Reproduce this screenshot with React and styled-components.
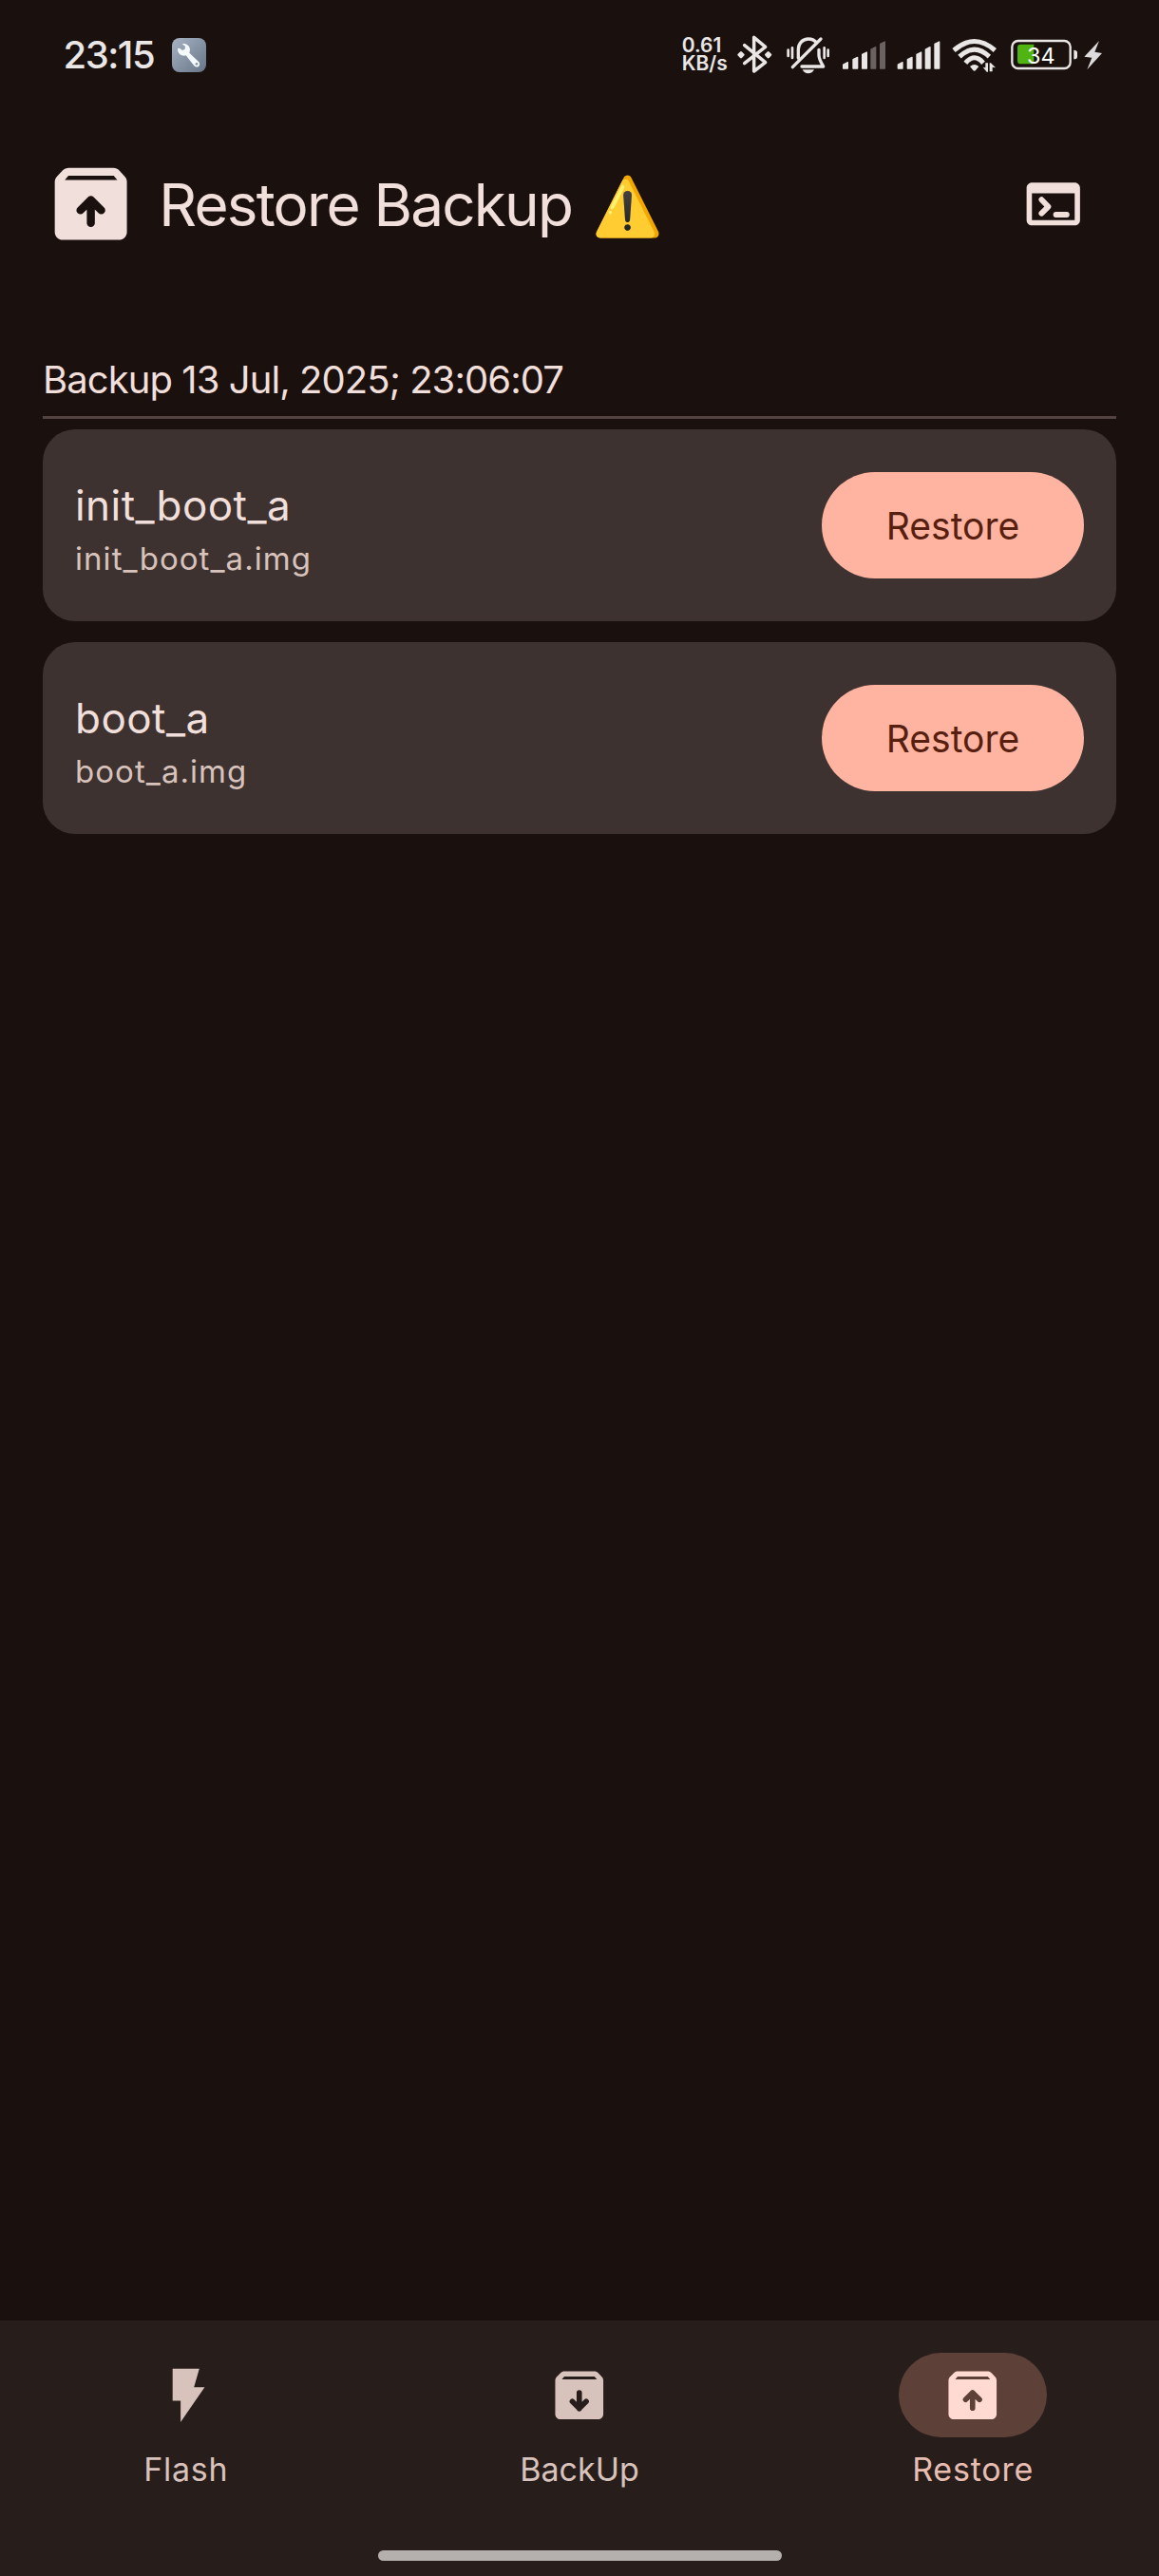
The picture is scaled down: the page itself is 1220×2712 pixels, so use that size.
import React from "react";
import styled, { createGlobalStyle } from "styled-components";

const GlobalStyle = createGlobalStyle`
  *, *::before, *::after { box-sizing: border-box; }
  body {
    margin: 0;
    background: #1a110f;
    font-family: Inter, "Noto Sans", sans-serif;
  }
`;

const Screen = styled.div`
  display: flex;
  flex-direction: column;
  width: 1220px;
  height: 2712px;
  overflow: hidden;
  background: #1a110f;
  color: #f1dfdb;
`;

/* Status bar */

const StatusBar = styled.header`
  display: flex;
  align-items: center;
  height: 120px;
  flex: none;
  padding: 0 59.3px 0 66.5px;
  color: #e9e6e5;
`;

const Clock = styled.span`
  width: 114.5px;
  padding-bottom: 4px;
  font-size: 40px;
  line-height: 48px;
  font-weight: 500;
  letter-spacing: -1.5px;
  white-space: nowrap;
`;

const NetSpeed = styled.div`
  display: flex;
  flex-direction: column;
  width: 57.3px;
  margin-left: auto;
  padding-bottom: 6px;
  font-size: 21px;
  line-height: 19.5px;
  font-weight: 600;
  white-space: nowrap;
`;

const StatusGlyph = styled.svg.attrs((p) => ({
  viewBox: `${p.$x} 0 ${p.$w} 240`,
  fill: "none",
}))`
  display: block;
  flex: none;
  width: ${(p) => p.$w / 3}px;
  height: 80px;
  margin-left: ${(p) => p.$gap || 0}px;
`;

/* App bar */

const AppBar = styled.div`
  display: flex;
  align-items: center;
  height: 189px;
  flex: none;
  padding: 0 77.75px 0 44.5px;
`;

const Title = styled.h1`
  display: flex;
  align-items: center;
  margin: 0 auto 0 21.5px;
  padding-top: 2px;
  font-size: 62px;
  line-height: 80px;
  font-weight: 400;
  letter-spacing: -1.8px;
  white-space: pre;
`;

const Emoji = styled.span`
  margin: 4px 0 0 21.5px;
  font-family: "Noto Color Emoji", sans-serif;
  font-size: 60px;
  line-height: 80px;
  letter-spacing: 0;
`;

const Icon = styled.svg.attrs({ viewBox: "0 0 24 24", fill: "none" })`
  display: block;
  flex: none;
  width: ${(p) => p.$size}px;
  height: ${(p) => p.$size}px;
  color: ${(p) => p.$color || "#f1dfdb"};
`;

/* Content */

const Content = styled.main`
  flex: 1;
  padding: 63px 45px 0;
`;

const SectionTitle = styled.h2`
  margin: 0;
  padding-bottom: 10px;
  border-bottom: 3px solid #534340;
  font-size: 40px;
  line-height: 56px;
  font-weight: 400;
  letter-spacing: -0.93px;
`;

const CardList = styled.div`
  display: flex;
  flex-direction: column;
  gap: 22px;
  padding-top: 11px;
`;

const Card = styled.section`
  display: flex;
  justify-content: space-between;
  height: 202px;
  padding: 45px 34px;
  border-radius: 34px;
  background: #3d322f;
`;

const CardText = styled.div`
  display: flex;
  flex-direction: column;
  gap: 6px;
  padding-top: 7px;
`;

const PartitionName = styled.span`
  font-size: 44px;
  line-height: 56px;
  letter-spacing: 0.45px;
`;

const FileName = styled.span`
  font-size: 33px;
  line-height: 44px;
  font-weight: 400;
  letter-spacing: 1.05px;
  color: #d8c2bc;
`;

const RestoreButton = styled.button`
  width: 276px;
  height: 112px;
  padding: 2px 0 0;
  border: 0;
  border-radius: 56px;
  background: #ffb4a2;
  color: #561f0f;
  font-family: inherit;
  font-size: 39px;
  line-height: 56px;
  font-weight: 400;
`;

/* Bottom navigation */

const BottomNav = styled.nav`
  display: flex;
  flex-direction: column;
  align-items: center;
  height: 269px;
  flex: none;
  padding-top: 34px;
  background: #271d1b;
`;

const NavItems = styled.div`
  display: grid;
  grid-template-columns: repeat(3, 1fr);
  gap: 22.5px;
  width: 100%;
`;

const NavItem = styled.div`
  display: flex;
  flex-direction: column;
  align-items: center;
`;

const Pill = styled.div`
  display: grid;
  place-items: center;
  width: 156px;
  height: 89px;
  border-radius: 44.5px;
  background: ${(p) => (p.$active ? "#5d4037" : "transparent")};
`;

const NavLabel = styled.span`
  margin-top: 11.5px;
  font-size: 34px;
  line-height: 44px;
  letter-spacing: ${(p) => p.$track}px;
  color: ${(p) => (p.$active ? "#e7bdb2" : "#d8c2bc")};
`;

const HomeHandle = styled.div`
  width: 425px;
  height: 11px;
  margin-top: 63.5px;
  border-radius: 6px;
  background: #b5b0ae;
`;

function ArchiveIcon({ size, color, down }) {
  const arrow = down
    ? "M12 11V17M9.4 14.3L12 16.9L14.6 14.3"
    : "M12 16.8V11M9.4 13.6L12 11L14.6 13.6";
  const id = `cut-${down ? "down" : "up"}-${Math.round(size)}`;
  return (
    <Icon $size={size} $color={color}>
      <mask id={id}>
        <rect width="24" height="24" fill="#fff" />
        <path d="M6.4 5H17.7L18.6 6.05H5.5Z" fill="#000" />
        <path d={arrow} stroke="#000" strokeWidth="2" strokeLinecap="round" strokeLinejoin="round" />
      </mask>
      <path
        mask={`url(#${id})`}
        fill="currentColor"
        d="M6.5 3H17.6C18.2 3 18.7 3.2 19.1 3.65L20.5 5.2C20.85 5.6 21 6 21 6.5V19C21 20.1 20.1 21 19 21H5C3.9 21 3 20.1 3 19V6.5C3 6 3.2 5.6 3.5 5.2L5 3.6C5.4 3.2 5.9 3 6.5 3Z"
      />
    </Icon>
  );
}

function TerminalIcon() {
  return (
    <Icon $size={67.5}>
      <path
        fill="currentColor"
        fillRule="evenodd"
        d="M4 4H20C21.1 4 22 4.9 22 6V18C22 19.1 21.1 20 20 20H4C2.9 20 2 19.1 2 18V6C2 4.9 2.9 4 4 4ZM4 8V18H20V8Z"
      />
      <path
        d="M7.6 10.4L10.1 13L7.6 15.5M13 16H17"
        stroke="currentColor"
        strokeWidth="2.1"
        strokeLinecap="round"
        strokeLinejoin="round"
      />
    </Icon>
  );
}

function FlashIcon() {
  return (
    <Icon $size={67.5} $color="#d8c2bc">
      <path d="M7 2V14H10V22L19 9H15L17 2Z" fill="currentColor" />
    </Icon>
  );
}

function WrenchBadge() {
  return (
    <StatusGlyph $x={423} $w={108}>
      <defs>
        <linearGradient id="badge" x1="0" y1="0" x2="1" y2="1">
          <stop offset="0" stopColor="#a7b3c3" />
          <stop offset="1" stopColor="#677588" />
        </linearGradient>
      </defs>
      <rect x="423" y="60" width="108" height="108" rx="24" fill="url(#badge)" />
      <path
        d="M447 92L456 99L464 95L465 86L455 79C467 76 479 84 480 96C480 100 479 104 478 107L508 136C512 141 511 147 507 150C503 153 497 152 493 148L467 115C453 119 440 109 441 93Z"
        fill="#f4f9fb"
      />
      <circle cx="501" cy="142" r="4" fill="#8593a4" />
    </StatusGlyph>
  );
}

function SignalGlyph({ start, gap, lit, width, xs }) {
  const tops = [136, 120, 104, 88, 71];
  return (
    <StatusGlyph $x={start} $w={width} $gap={gap}>
      {xs.map((x, i) => (
        <path
          key={x}
          d={`M${x + 2} 156V${tops[i] + 8}L${x + 16} ${tops[i] + 1}V156Z`}
          fill="currentColor"
          stroke="currentColor"
          strokeWidth="4"
          strokeLinejoin="round"
          opacity={i < lit ? 1 : 0.38}
        />
      ))}
    </StatusGlyph>
  );
}

function StatusIcons() {
  return (
    <>
      <StatusGlyph $x={225} $w={116}>
        <path
          d="M251 83L317 137L281 165V58L317 88L251 140"
          stroke="currentColor"
          strokeWidth="10.5"
          strokeLinejoin="round"
          strokeLinecap="round"
        />
        <path
          d="M240 106L247 113L240 120L233 113ZM326 106L333 113L326 120L319 113Z"
          fill="currentColor"
          stroke="currentColor"
          strokeWidth="8"
          strokeLinejoin="round"
        />
      </StatusGlyph>
      <StatusGlyph $x={380} $w={142} $gap={13}>
        <g stroke="currentColor" strokeWidth="10" strokeLinecap="round" strokeLinejoin="round">
          <path d="M420 124V96C420 78 433 63 452 63C463 63 471 67 477 74" />
          <path d="M485 97V114C485 127 492 138 499 150H431" />
          <path d="M402 152L491 63" />
        </g>
        <path
          d="M388 98V117M401 91V123M502 91V123M514 98V117"
          stroke="currentColor"
          strokeWidth="8"
          strokeLinecap="round"
        />
        <path d="M433 160H470C466 168 460 172 451 172C443 172 437 168 433 160Z" fill="currentColor" />
      </StatusGlyph>
      <SignalGlyph start={555} width={145} gap={11} lit={3} xs={[561, 592, 621, 649, 678]} />
      <SignalGlyph start={8} width={142} gap={9.4} lit={5} xs={[13, 43, 72, 100, 129]} />
      <StatusGlyph $x={182} $w={146} $gap={10.7}>
        <g stroke="currentColor" strokeWidth="15" strokeLinejoin="round">
          <path d="M191 99Q256 42 321 99" />
          <path d="M209 119Q256 74 303 119" />
          <path d="M228 139Q256 106 284 139" />
        </g>
        <path d="M242 150Q256 138 270 150L260 162Q256 166 252 162Z" fill="currentColor" />
        <path
          d="M283 152L291 154V139H299V167H295ZM304 139H308L323 154L313 152V166H304Z"
          fill="currentColor"
          stroke="#1a110f"
          strokeWidth="6"
          paintOrder="stroke"
        />
      </StatusGlyph>
      <StatusGlyph $x={368} $w={217} $gap={13.4}>
        <rect x="375" y="69" width="184" height="87" rx="19" stroke="currentColor" strokeWidth="7" />
        <path d="M402 80H444V142H402Q392 142 392 132V90Q392 80 402 80Z" fill="#50b413" />
        <path d="M570 98Q581 98 581 106V119Q581 127 570 127Z" fill="currentColor" />
        <text x="422" y="141" fontSize="70" fontWeight="400" fontFamily="Inter, sans-serif" fill="#fff">
          34
        </text>
      </StatusGlyph>
      <StatusGlyph $x={600} $w={62} $gap={5}>
        <path d="M651 69L604 119L628 122L613 160L660 108L637 104Z" fill="#dcdadb" />
      </StatusGlyph>
    </>
  );
}

const backups = ["init_boot_a", "boot_a"];

const tabs = [
  { label: "Flash", track: 0.7, icon: <FlashIcon /> },
  { label: "BackUp", track: 0, icon: <ArchiveIcon size={67.5} color="#d8c2bc" down /> },
  { label: "Restore", track: 0.8, active: true, icon: <ArchiveIcon size={67.5} color="#ffdad2" /> },
];

export default function App() {
  return (
    <Screen>
      <GlobalStyle />
      <StatusBar>
        <Clock>23:15</Clock>
        <WrenchBadge />
        <NetSpeed>
          <span>0.61</span>
          <span>KB/s</span>
        </NetSpeed>
        <StatusIcons />
      </StatusBar>
      <AppBar>
        <ArchiveIcon size={101.25} color="#f1dfdb" />
        <Title>
          Restore Backup<Emoji>⚠️</Emoji>
        </Title>
        <TerminalIcon />
      </AppBar>
      <Content>
        <SectionTitle>Backup 13 Jul, 2025; 23:06:07</SectionTitle>
        <CardList>
          {backups.map((name) => (
            <Card key={name}>
              <CardText>
                <PartitionName>{name}</PartitionName>
                <FileName>{name}.img</FileName>
              </CardText>
              <RestoreButton>Restore</RestoreButton>
            </Card>
          ))}
        </CardList>
      </Content>
      <BottomNav>
        <NavItems>
          {tabs.map((tab) => (
            <NavItem key={tab.label}>
              <Pill $active={tab.active}>{tab.icon}</Pill>
              <NavLabel $active={tab.active} $track={tab.track}>
                {tab.label}
              </NavLabel>
            </NavItem>
          ))}
        </NavItems>
        <HomeHandle />
      </BottomNav>
    </Screen>
  );
}
